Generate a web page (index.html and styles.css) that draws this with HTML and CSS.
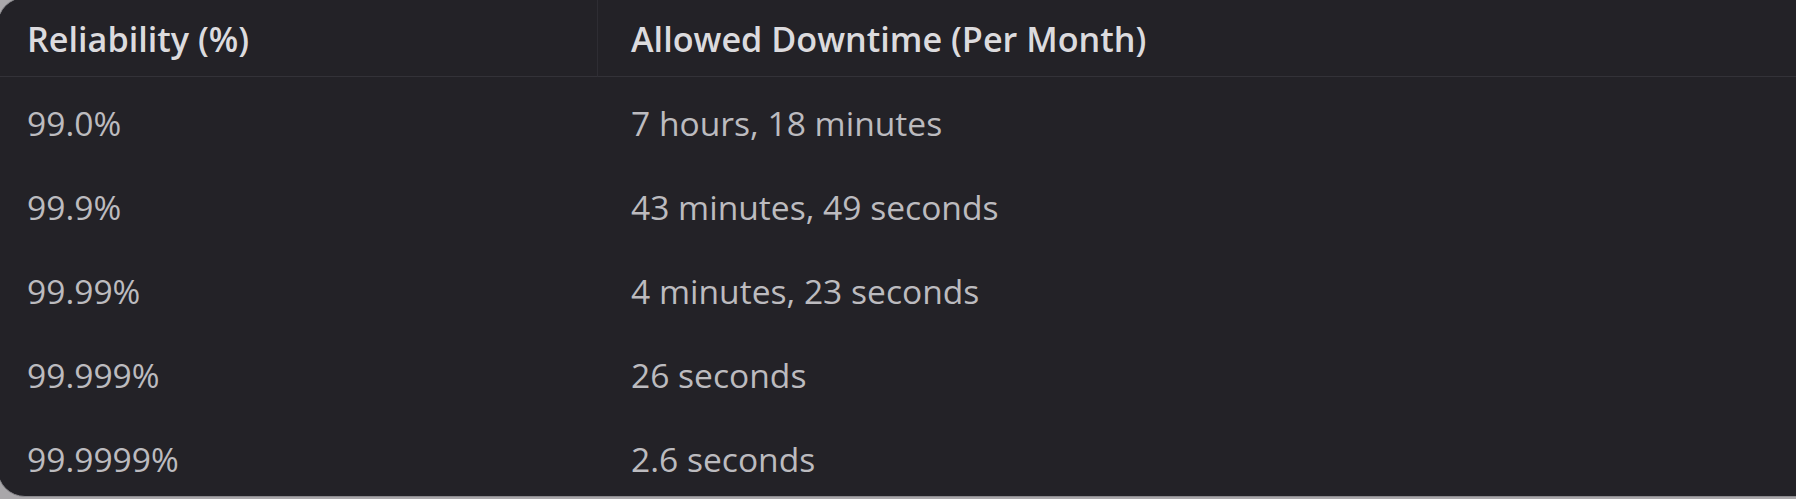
FILE: index.html
```html
<!DOCTYPE html>
<html lang="en">
<head>
<meta charset="utf-8">
<title>Reliability table</title>
<link rel="stylesheet" href="styles.css">
</head>
<body>
<div class="frame">
  <table class="sla">
    <thead>
      <tr>
        <th class="col-rel">Reliability (%)</th>
        <th class="col-down">Allowed Downtime (Per Month)</th>
      </tr>
    </thead>
    <tbody>
      <tr><td>99.0%</td><td>7 hours, 18 minutes</td></tr>
      <tr><td>99.9%</td><td>43 minutes, 49 seconds</td></tr>
      <tr><td>99.99%</td><td>4 minutes, 23 seconds</td></tr>
      <tr><td>99.999%</td><td>26 seconds</td></tr>
      <tr><td>99.9999%</td><td>2.6 seconds</td></tr>
    </tbody>
  </table>
</div>
</body>
</html>
```

FILE: styles.css
```css
html, body {
  margin: 0;
  padding: 0;
  height: 100%;
  overflow: hidden;
  background: #a9a7aa;
}

body {
  font-family: "Open Sans", "Noto Sans", sans-serif;
}

.frame {
  margin: -3px -80px 0 -3px;
  border: 1.5px solid #8c8b8f;
  border-radius: 28px;
  background: #232227;
  overflow: hidden;
}

.sla {
  width: 100%;
  border-collapse: separate;
  border-spacing: 0;
}

.sla th,
.sla td {
  text-align: left;
  padding: 0 0 0 29px;
  white-space: nowrap;
  vertical-align: middle;
  box-sizing: border-box;
}

.sla th {
  height: 78.5px;
  padding-top: 4px;
  font-size: 34.2px;
  font-weight: 600;
  color: #dcdbde;
  border-bottom: 1px solid #333238;
}

.sla th.col-rel {
  width: 600px;
  border-right: 1px solid #2e2d33;
}

.sla th.col-down {
  padding-left: 33px;
}

.sla td {
  height: 83.9px;
  padding-top: 9px;
  font-size: 33.6px;
  font-weight: 400;
  color: #bcbbbf;
}

.sla td + td {
  padding-left: 33px;
}
```
